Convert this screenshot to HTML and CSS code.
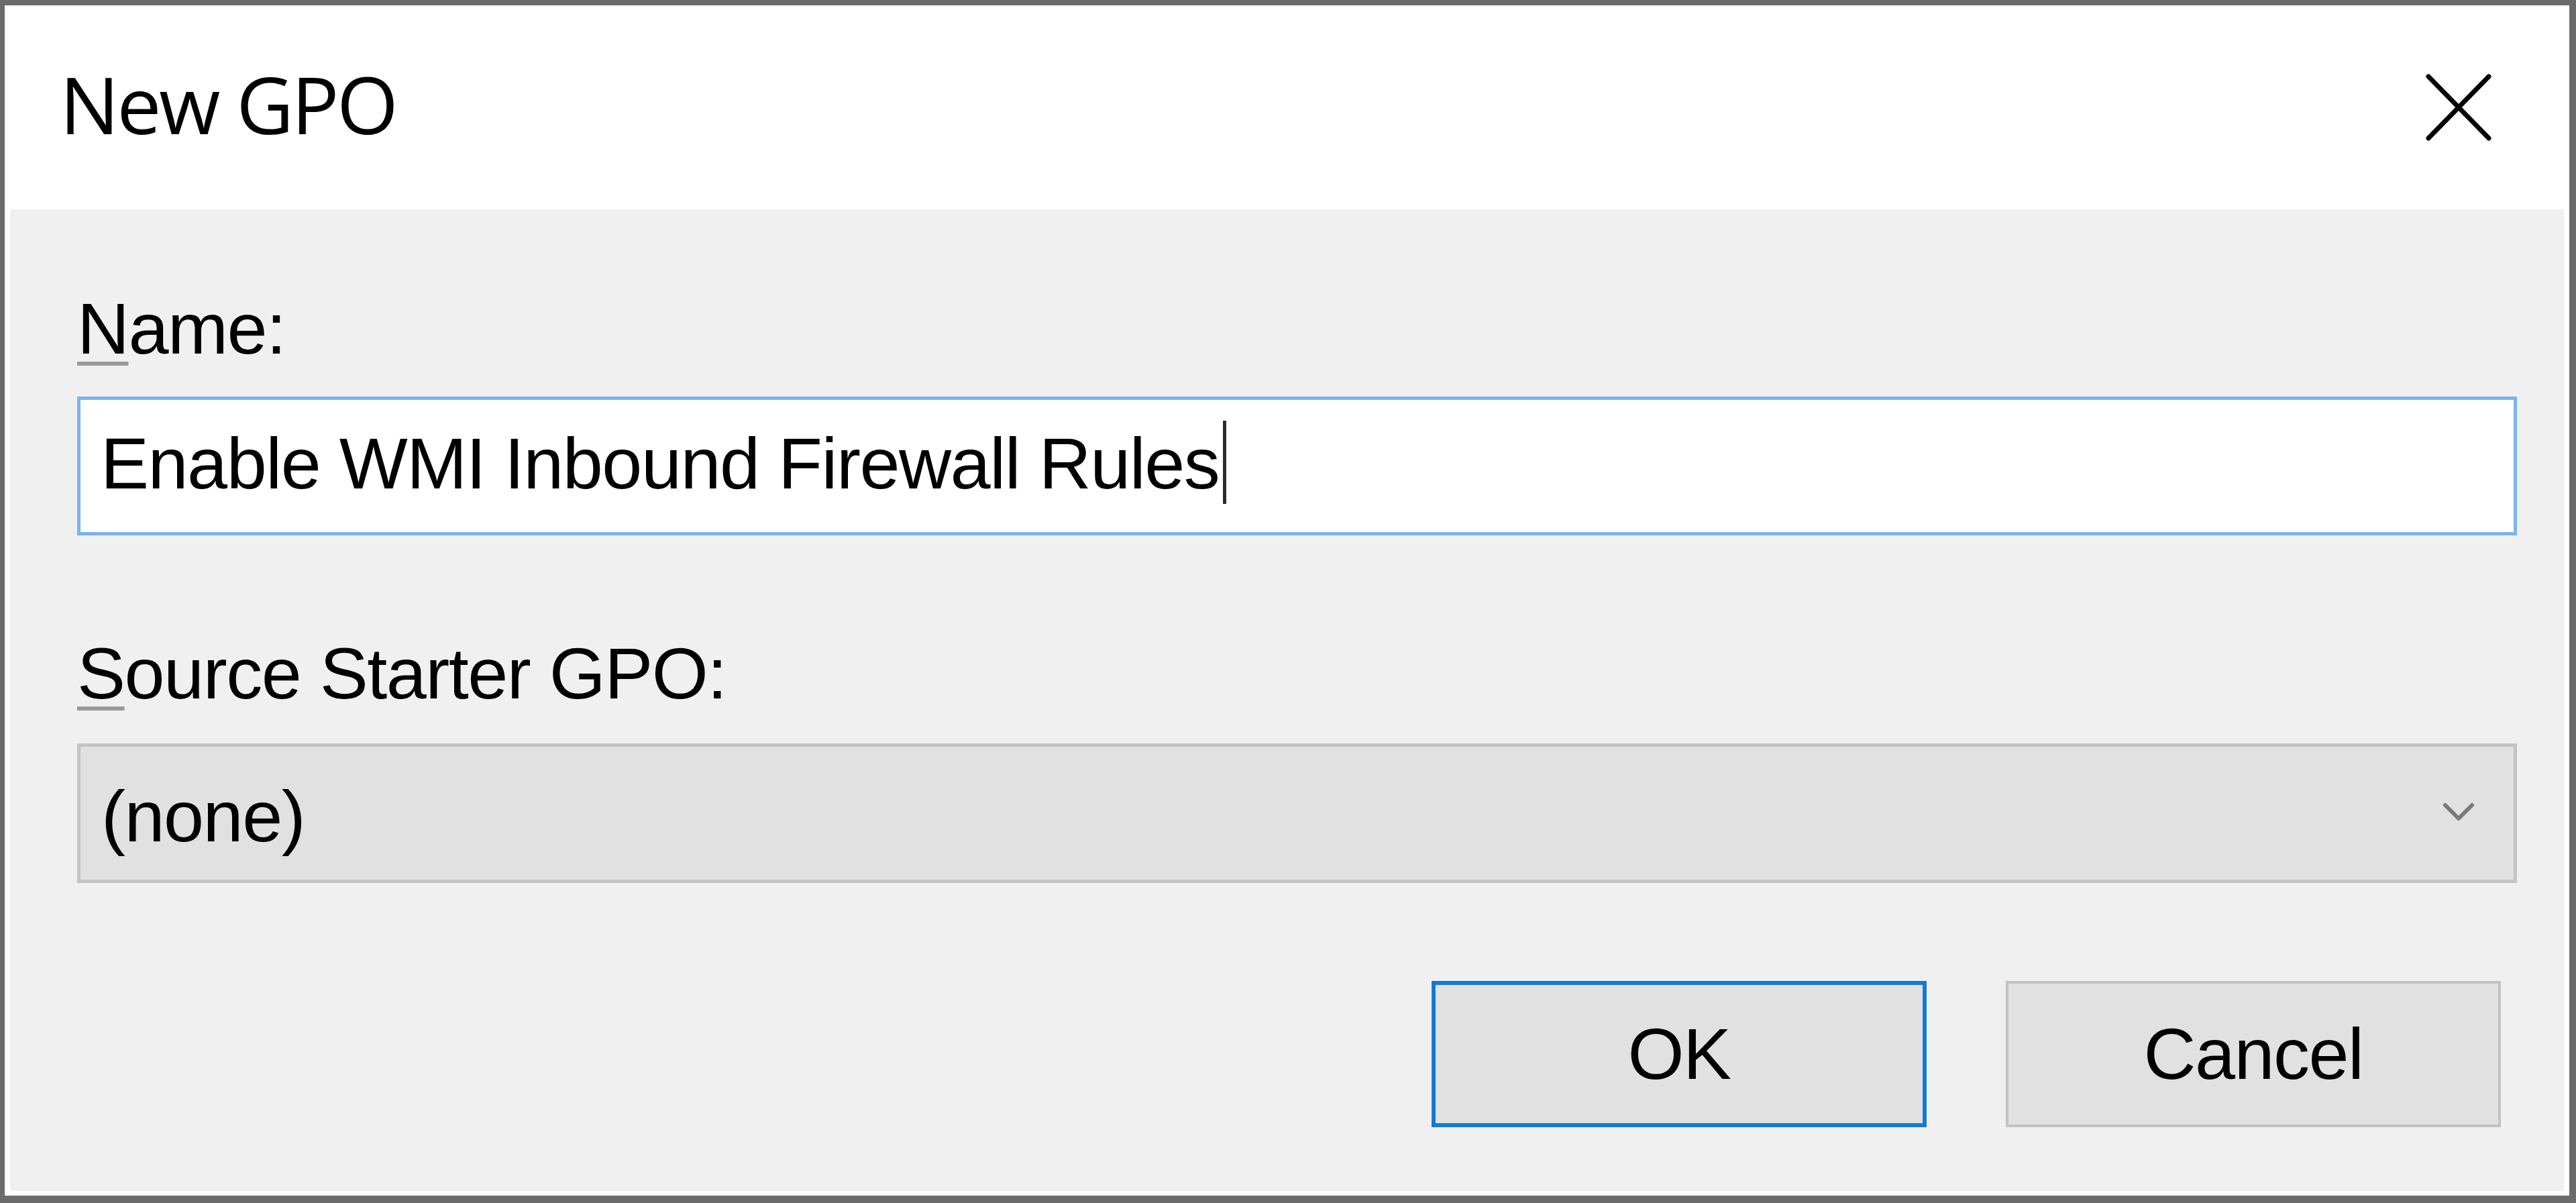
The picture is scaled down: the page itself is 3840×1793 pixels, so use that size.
FILE: index.html
```html
<!DOCTYPE html>
<html lang="en">
<head>
<meta charset="utf-8">
<title>New GPO</title>
<link rel="stylesheet" href="styles.css">
</head>
<body>
<div class="window">
  <div class="titlebar">
    <span class="title">New GPO</span>
    <svg class="close" viewBox="0 0 100 100" width="100" height="100" aria-label="Close">
      <path d="M5 4 L95 96 M95 4 L5 96" stroke="#000" stroke-width="7" stroke-linecap="round" fill="none"/>
    </svg>
  </div>
  <div class="content">
    <div class="label"><span class="acc">N</span>ame:</div>
    <div class="textbox">Enable WMI Inbound Firewall Rules<span class="caret"></span></div>
    <div class="label label-source"><span class="acc">S</span>ource Starter GPO:</div>
    <div class="combo">
      <span class="combo-text">(none)</span>
      <svg class="chev" viewBox="0 0 50 30" width="50" height="30">
        <path d="M5 5 L25 25 L45 5" stroke="#7a7a7a" stroke-width="6" fill="none" stroke-linecap="round" stroke-linejoin="round"/>
      </svg>
    </div>
    <div class="buttons">
      <div class="btn btn-default">OK</div>
      <div class="btn">Cancel</div>
    </div>
  </div>
</div>
</body>
</html>
```
FILE: styles.css
```css
html, body {
  margin: 0;
  padding: 0;
  background: #6b6b6b;
}

.window {
  box-sizing: border-box;
  width: 3840px;
  height: 1793px;
  border-style: solid;
  border-color: #6b6b6b;
  border-width: 8px 10px 11px 7px;
  background: #ffffff;
  display: flex;
  flex-direction: column;
}

.titlebar {
  box-sizing: border-box;
  height: 304px;
  flex: none;
  display: flex;
  align-items: flex-start;
  justify-content: space-between;
  padding: 0 115px 0 82px;
  background: #ffffff;
}

.title {
  font-family: "Open Sans", "Noto Sans", "Liberation Sans", sans-serif;
  font-size: 118px;
  line-height: 118px;
  letter-spacing: -3.5px;
  color: #000;
  padding-top: 88px;
}

.close {
  display: block;
  margin-top: 102px;
}

.content {
  flex: 1;
  margin: 0 8px 7px 8px;
  background: #f0f0f0;
  padding: 124px 70px 0 100px;
  display: flex;
  flex-direction: column;
  font-family: "Liberation Sans", Arial, sans-serif;
  font-size: 108px;
  line-height: 108px;
  letter-spacing: -1.5px;
  color: #000;
}

.label {
  height: 108px;
  white-space: nowrap;
}

.acc {
  text-decoration: underline;
  text-decoration-color: #9a9a9a;
  text-decoration-thickness: 6px;
  text-underline-offset: 12px;
  text-decoration-skip-ink: none;
}

.textbox {
  box-sizing: border-box;
  margin-top: 47px;
  height: 207px;
  border: 5px solid #7ab4ec;
  background: #ffffff;
  padding: 31px 0 0 30px;
  white-space: nowrap;
}

.caret {
  display: inline-block;
  width: 5px;
  height: 124px;
  margin-left: 6px;
  background: #2b2b2b;
  vertical-align: -23px;
}

.label-source {
  margin-top: 152px;
}

.combo {
  box-sizing: border-box;
  margin-top: 50px;
  height: 208px;
  border: 5px solid #c4c4c4;
  background: #e1e1e1;
  display: flex;
  align-items: center;
  justify-content: space-between;
  padding: 0 57px 0 31px;
}

.combo-text {
  padding-top: 10px;
}

.chev {
  display: block;
  margin-top: -4px;
}

.buttons {
  margin-top: 146px;
  margin-right: 24px;
  display: flex;
  justify-content: flex-end;
  gap: 118px;
}

.btn {
  box-sizing: border-box;
  width: 738px;
  height: 218px;
  border: 4px solid #c2c2c2;
  background: #e1e1e1;
  display: flex;
  align-items: center;
  justify-content: center;
}

.btn-default {
  border: 6px solid #1479d6;
}
```
